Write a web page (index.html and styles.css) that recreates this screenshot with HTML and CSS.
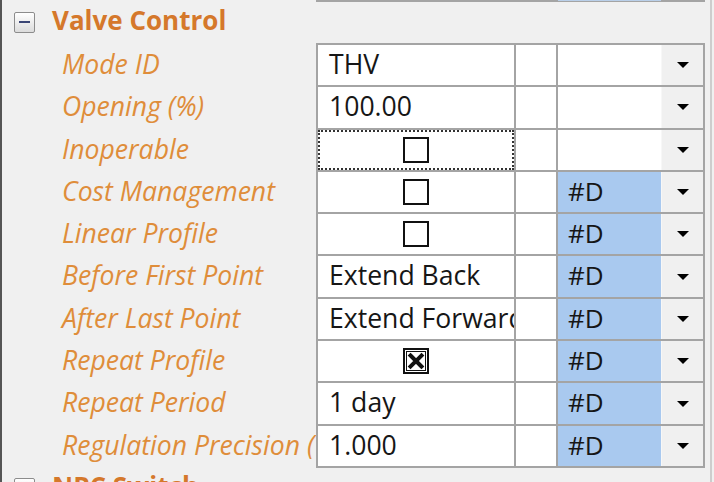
FILE: index.html
```html
<!DOCTYPE html>
<html>
<head>
<meta charset="utf-8">
<link rel="stylesheet" href="styles.css">
</head>
<body>
<div class="panel">
  <div class="prev-tail"><span class="prev-blue"></span></div>
  <div class="group">
    <div class="group-header">
      <span class="toggle"><span class="minus"></span></span>
      <span class="group-title">Valve Control</span>
    </div>
    <div class="group-body">
      <div class="labels">
        <div class="label">Mode ID</div>
        <div class="label">Opening (%)</div>
        <div class="label">Inoperable</div>
        <div class="label">Cost Management</div>
        <div class="label">Linear Profile</div>
        <div class="label">Before First Point</div>
        <div class="label">After Last Point</div>
        <div class="label">Repeat Profile</div>
        <div class="label">Repeat Period</div>
        <div class="label">Regulation Precision (%)</div>
      </div>
      <div class="grid">
        <div class="cell value">THV</div>
        <div class="cell"></div>
        <div class="cell combo"><span class="combo-text"></span><span class="drop"><span class="tri"></span></span></div>

        <div class="cell value">100.00</div>
        <div class="cell"></div>
        <div class="cell combo"><span class="combo-text"></span><span class="drop"><span class="tri"></span></span></div>

        <div class="cell value center focus"><span class="check"></span></div>
        <div class="cell"></div>
        <div class="cell combo"><span class="combo-text"></span><span class="drop"><span class="tri"></span></span></div>

        <div class="cell value center"><span class="check"></span></div>
        <div class="cell"></div>
        <div class="cell combo"><span class="combo-text sel">#D</span><span class="drop"><span class="tri"></span></span></div>

        <div class="cell value center"><span class="check"></span></div>
        <div class="cell"></div>
        <div class="cell combo"><span class="combo-text sel">#D</span><span class="drop"><span class="tri"></span></span></div>

        <div class="cell value">Extend Back</div>
        <div class="cell"></div>
        <div class="cell combo"><span class="combo-text sel">#D</span><span class="drop"><span class="tri"></span></span></div>

        <div class="cell value">Extend Forward</div>
        <div class="cell"></div>
        <div class="cell combo"><span class="combo-text sel">#D</span><span class="drop"><span class="tri"></span></span></div>

        <div class="cell value center"><span class="check checked"><svg width="26" height="26" viewBox="0 0 26 26"><rect x="1" y="1" width="24" height="24" fill="#fff" stroke="#111" stroke-width="2"/><rect x="3.5" y="3.5" width="19" height="19" fill="none" stroke="#111" stroke-width="1"/><path d="M7.5 7.5 L18.5 18.5 M18.5 7.5 L7.5 18.5" stroke="#111" stroke-width="4" stroke-linecap="square"/></svg></span></div>
        <div class="cell"></div>
        <div class="cell combo"><span class="combo-text sel">#D</span><span class="drop"><span class="tri"></span></span></div>

        <div class="cell value">1 day</div>
        <div class="cell"></div>
        <div class="cell combo"><span class="combo-text sel">#D</span><span class="drop"><span class="tri"></span></span></div>

        <div class="cell value">1.000</div>
        <div class="cell"></div>
        <div class="cell combo"><span class="combo-text sel">#D</span><span class="drop"><span class="tri"></span></span></div>
      </div>
    </div>
  </div>
  <div class="group">
    <div class="group-header">
      <span class="toggle"><span class="minus"></span><span class="plus-v"></span></span>
      <span class="group-title">NPC Switch</span>
    </div>
  </div>
</div>
</body>
</html>
```

FILE: styles.css
```css
html, body {
  margin: 0;
  padding: 0;
  background: #f0f0f0;
}

.panel {
  box-sizing: border-box;
  width: 712px;
  height: 482px;
  overflow: hidden;
  border-left: 2px solid #555;
  border-right: 2px solid #cdcdcd;
  background: #f0f0f0;
  font-family: "Open Sans", "Noto Sans", sans-serif;
}

.prev-tail {
  display: flex;
  margin-left: 314px;
  width: 389px;
  height: 2px;
  background: #a4a4a4;
}

.prev-blue {
  margin-left: 242px;
  width: 103px;
  height: 1px;
  background: #b9cfe9;
}

.group-header {
  display: flex;
  align-items: flex-start;
  height: 41px;
}

.toggle {
  position: relative;
  box-sizing: border-box;
  width: 21px;
  height: 21px;
  margin: 10px 0 0 12px;
  border: 1px solid #8c8c8c;
  border-radius: 2px;
  background: linear-gradient(#ffffff, #dcdcdc);
}

.minus {
  position: absolute;
  left: 4px;
  top: 8px;
  width: 11px;
  height: 2px;
  background: #3b4675;
}

.plus-v {
  position: absolute;
  left: 8.5px;
  top: 4px;
  width: 2px;
  height: 11px;
  background: #3b4675;
}

.group-title {
  margin-left: 17px;
  font-size: 26px;
  font-weight: 700;
  line-height: 37px;
  color: #d5782b;
  white-space: nowrap;
}

.group-body {
  display: flex;
}

.labels {
  display: flex;
  flex-direction: column;
  gap: 2px;
  width: 314px;
  padding-top: 2px;
  overflow: hidden;
}

.label {
  box-sizing: border-box;
  height: 40.3px;
  line-height: 38px;
  padding-left: 60px;
  font-size: 26.6px;
  font-style: italic;
  color: #df8d3a;
  white-space: nowrap;
  overflow: hidden;
}

.grid {
  display: grid;
  grid-template-columns: 196px 40px 145px;
  grid-auto-rows: 40.3px;
  gap: 2px;
  padding: 2px;
  background: #a4a4a4;
}

.cell {
  background: #fff;
  overflow: hidden;
  white-space: nowrap;
}

.value {
  box-sizing: border-box;
  padding-left: 11px;
  font-size: 26.6px;
  line-height: 39px;
  color: #161616;
}

.center {
  display: flex;
  align-items: center;
  justify-content: center;
  padding-left: 0;
}

.focus {
  outline: 2px dotted #333;
  outline-offset: -2px;
}

.check {
  display: block;
  box-sizing: border-box;
  width: 26px;
  height: 26px;
  border: 2px solid #111;
  background: #fff;
}

.check.checked {
  border: none;
}

.check svg {
  display: block;
}

.combo {
  display: flex;
}

.combo-text {
  box-sizing: border-box;
  width: 103px;
  padding-left: 10px;
  font-size: 26px;
  line-height: 39px;
  color: #161616;
}

.combo-text.sel {
  background: #a9c9ef;
}

.drop {
  display: flex;
  align-items: center;
  justify-content: center;
  flex: 1;
  background: #f0f0f0;
  border-left: 1px solid #f7f7f7;
}

.tri {
  width: 0;
  height: 0;
  border-left: 6px solid transparent;
  border-right: 6px solid transparent;
  border-top: 6px solid #000;
}
```
